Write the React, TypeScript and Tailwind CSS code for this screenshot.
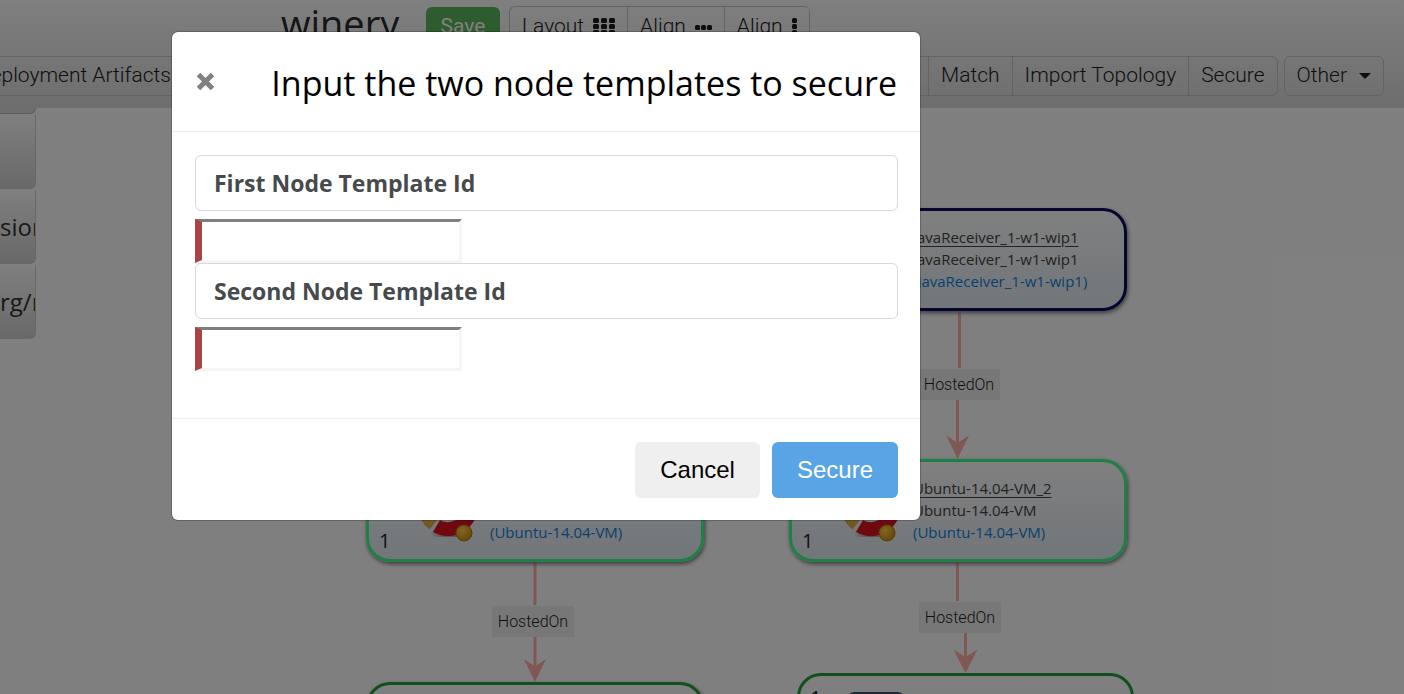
import type { ReactNode } from "react";

const toolButton =
  "h-10 shrink-0 border-r border-[#c6c6c6] px-3 text-[21px] font-light whitespace-nowrap text-[#1c1c1c]";

function GridIcon() {
  return (
    <svg width="22" height="18" viewBox="0 0 22 18" fill="currentColor" aria-hidden="true">
      {[0, 8, 16].map((x) =>
        [0, 6, 12].map((y) => <rect key={`${x}-${y}`} x={x} y={y} width="6" height="5" rx="1.500" />),
      )}
    </svg>
  );
}

function DotsIcon({ vertical = false }: { vertical?: boolean }) {
  return (
    <svg
      width={vertical ? 5 : 17}
      height={vertical ? 18 : 5}
      viewBox={vertical ? "0 0 5 18" : "0 0 17 5"}
      fill="currentColor"
      aria-hidden="true"
    >
      {[0, 6, 12].map((p) => (
        <rect key={p} x={vertical ? 0 : p} y={vertical ? p : 0} width="5" height="5" rx="1.500" />
      ))}
    </svg>
  );
}

function UbuntuLogo() {
  return (
    <svg className="h-16 w-16 shrink-0" viewBox="0 0 64 64" aria-hidden="true">
      <defs>
        <radialGradient id="gold" cx="40%" cy="35%" r="65%">
          <stop offset="0" stopColor="#ffcf4a" />
          <stop offset="1" stopColor="#d28e16" />
        </radialGradient>
        <filter id="soft" x="-20%" y="-20%" width="140%" height="150%">
          <feGaussianBlur stdDeviation="2" />
        </filter>
      </defs>
      <path d="M20 50A23 23 0 0 0 50 50" stroke="#a87878" strokeWidth="13" fill="none" opacity="0.6" filter="url(#soft)" />
      <path d="M8 25A23 23 0 0 1 19 8" stroke="#f39a25" strokeWidth="14" fill="none" />
      <path d="M22 6A23 23 0 0 1 53 21" stroke="#e2571e" strokeWidth="14" fill="none" />
      <path d="M8 27A23 23 0 0 0 16.800 45.100" stroke="#e2ae48" strokeWidth="14" fill="none" />
      <path d="M19.500 47A23 23 0 0 0 52.600 34.900" stroke="#dd1220" strokeWidth="14" fill="none" />
      <circle cx="47" cy="54" r="8" fill="url(#gold)" stroke="#b97910" />
    </svg>
  );
}

function PaletteItem({ children }: { children?: ReactNode }) {
  return (
    <li className="flex h-[74px] items-center overflow-hidden rounded-br-md border-r border-b border-[#cfcfcf] bg-linear-to-b from-white to-[#d2d2d2] text-2xl whitespace-nowrap text-[#333]">
      {children}
    </li>
  );
}

function NodeTemplate({
  place,
  id,
  name,
  type,
  count,
  logo,
}: {
  place: string;
  id?: string;
  name?: string;
  type?: string;
  count?: string;
  logo?: ReactNode;
}) {
  return (
    <article
      className={`absolute flex h-[103px] w-[338px] rounded-3xl border-3 bg-linear-to-b from-white to-[#e4edf4] shadow-[1px_2px_4px_#777] ${place}`}
    >
      <div className="flex w-12 items-end pb-1 pl-[10px] text-xl text-[#222]">{count}</div>
      <div className="flex w-[73px] items-center">{logo}</div>
      <div className="pt-[15px] text-[15px] leading-[22px] whitespace-nowrap text-[#444]">
        <p className="underline underline-offset-3">{id}</p>
        <p>{name}</p>
        <p className="text-[#0e83dc]">{type}</p>
      </div>
    </article>
  );
}

function RelationLabel({ place }: { place: string }) {
  return (
    <span
      className={`absolute flex h-[31px] w-[82px] items-center justify-center bg-[#efefef] font-[Roboto] text-base font-light text-[#1c1c1c] ${place}`}
    >
      HostedOn
    </span>
  );
}

function Field({ id, label }: { id: string; label: string }) {
  return (
    <div>
      <label
        htmlFor={id}
        className="mb-2 flex h-14 items-center rounded-md border border-[#d9d9d9] px-[18px] text-[23px] font-bold text-[#464a4c]"
      >
        {label}
      </label>
      <input
        id={id}
        type="text"
        className="block h-11 w-[267px] border-3 border-l-7 border-t-[#7f7f7f] border-r-[#f5f5f5] border-b-[#f5f5f5] border-l-[#a94442] bg-white px-2 text-2xl outline-none"
      />
    </div>
  );
}

export default function App() {
  return (
    <div className="relative h-screen overflow-hidden bg-white font-['Open_Sans','Noto_Sans',sans-serif]">
      <header className="flex h-[108px] flex-col gap-[9px] bg-linear-to-b from-white to-[#dcdcdc] pt-[7px] font-[Roboto]">
        <div className="flex h-10 items-center pl-[281px]">
          <h1 className="w-[145px] pb-2 font-['Open_Sans'] text-[38px] leading-10 text-[#292b2c]">winery</h1>
          <button type="button" className="h-10 w-[74px] rounded-md bg-[#5cb85c] text-[21px] text-white">
            Save
          </button>
          <div className="ml-[9px] flex overflow-hidden rounded-md border border-r-0 border-[#c6c6c6]">
            <button type="button" className={`${toolButton} flex items-center gap-[9px]`}>
              Layout <GridIcon />
            </button>
            <button type="button" className={`${toolButton} flex items-center gap-[9px]`}>
              Align <DotsIcon />
            </button>
            <button type="button" className={`${toolButton} flex items-center gap-[9px]`}>
              Align <DotsIcon vertical />
            </button>
          </div>
        </div>
        <div className="flex justify-end gap-[6px] pr-5">
          <div className="flex h-10 shrink-0 items-center overflow-hidden rounded-md border border-[#c6c6c6]">
            <button type="button" className={toolButton}>
              Deployment Artifacts
            </button>
            <div className="h-10 w-[745px] border-r border-[#c6c6c6]" />
            <button type="button" className={toolButton}>
              Match
            </button>
            <button type="button" className={toolButton}>
              Import Topology
            </button>
            <button type="button" className="h-10 px-3 text-[21px] font-light text-[#1c1c1c]">
              Secure
            </button>
          </div>
          <button
            type="button"
            className="flex h-10 shrink-0 items-center gap-3 rounded-md border border-[#c6c6c6] px-3 text-[21px] font-light text-[#1c1c1c]"
          >
            Other
            <svg width="12" height="6" viewBox="0 0 12 6" fill="currentColor" aria-hidden="true">
              <path d="M0 0h12L6 6z" />
            </svg>
          </button>
        </div>
      </header>

      <ul className="flex w-9 flex-col gap-px">
        <li className="h-[6px] rounded-br-md border-r border-b border-[#b8b8b8] bg-[#dcdcdc]" />
        <PaletteItem />
        <PaletteItem>sion</PaletteItem>
        <PaletteItem>rg/n</PaletteItem>
      </ul>

      <main className="absolute inset-0">
        <svg className="absolute inset-0 h-full w-full" aria-hidden="true">
          <g stroke="#ffb0a6" strokeWidth="3" fill="none">
            <path d="M959.500 311V368M957.500 400V445M957.500 562V601M965.500 633V658M535 562V605M535 637V667" />
          </g>
          <g fill="#ffb0a6">
            <path d="M957.500 459L946.500 435.500L957.500 443L969 435.500Z" />
            <path d="M965.500 673L953.500 649.500L965.500 657L977.500 649.500Z" />
            <path d="M535 682L524 659L535 666.500L546 659Z" />
          </g>
        </svg>
        <NodeTemplate
          place="left-[789px] top-[208px] border-[#0a0a5e]"
          id="JavaReceiver_1-w1-wip1"
          name="JavaReceiver_1-w1-wip1"
          type="(JavaReceiver_1-w1-wip1)"
        />
        <NodeTemplate
          place="left-[789px] top-[459px] border-[#3cff8f]"
          id="Ubuntu-14.04-VM_2"
          name="Ubuntu-14.04-VM"
          type="(Ubuntu-14.04-VM)"
          count="1"
          logo={<UbuntuLogo />}
        />
        <NodeTemplate
          place="left-[366px] top-[459px] border-[#3cff8f]"
          id="Ubuntu-14.04-VM"
          name="Ubuntu-14.04-VM"
          type="(Ubuntu-14.04-VM)"
          count="1"
          logo={<UbuntuLogo />}
        />
        <NodeTemplate place="left-[366px] top-[682px] border-[#22a03c]" />
        <div className="absolute top-[673px] left-[797px] flex h-[103px] w-[337px] items-start rounded-3xl border-3 border-[#22a03c] bg-linear-to-b from-white to-[#e4edf4]">
          <span className="w-12 pt-2 pl-[10px] text-xl text-[#222]">1</span>
          <span className="mt-4 h-12 w-14 rounded-md bg-[#3c5278]" />
        </div>
        <RelationLabel place="left-[918px] top-[369px]" />
        <RelationLabel place="left-[919px] top-[602px]" />
        <RelationLabel place="left-[492px] top-[606px]" />
      </main>

      <div className="absolute inset-0 bg-black/50 pt-8 pr-4 pl-[172px]">
        <section
          role="dialog"
          aria-modal="true"
          aria-labelledby="dialog-title"
          className="w-full max-w-[748px] rounded-md bg-white text-black shadow-[0_0_0_1px_rgba(0,0,0,0.2)]"
        >
          <header className="flex h-[100px] items-center justify-between border-b border-[#eceeef] px-[23px]">
            <button type="button" aria-label="Close" className="pl-0.5 text-[#808080]">
              <svg width="17" height="17" viewBox="0 0 17 17" aria-hidden="true">
                <path d="M1.500 1.500L15.500 15.500M15.500 1.500L1.500 15.500" stroke="currentColor" strokeWidth="5" />
              </svg>
            </button>
            <h2 id="dialog-title" className="pt-1 text-[34px] whitespace-nowrap">
              Input the two node templates to secure
            </h2>
          </header>
          <form className="pt-[23px] pr-[22px] pb-[47px] pl-[23px]">
            <Field id="first-node" label="First Node Template Id" />
            <Field id="second-node" label="Second Node Template Id" />
          </form>
          <footer className="flex h-[102px] items-center justify-end gap-3 border-t border-[#eceeef] px-[22px] font-['Liberation_Sans',sans-serif] text-2xl">
            <button type="button" className="h-14 rounded-md bg-[#efefef] px-[25px]">
              Cancel
            </button>
            <button type="button" className="h-14 rounded-md bg-[#59a4e5] px-[25px] text-white">
              Secure
            </button>
          </footer>
        </section>
      </div>
    </div>
  );
}
